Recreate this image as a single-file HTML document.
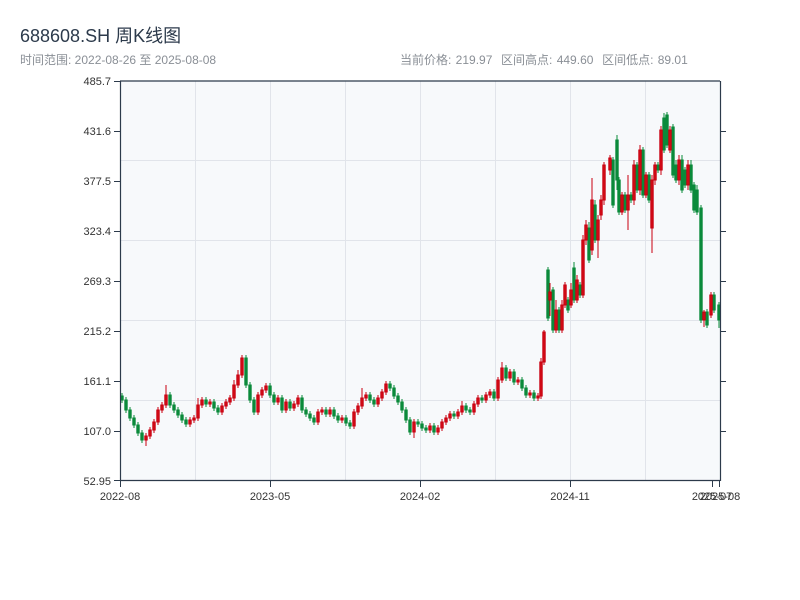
<!DOCTYPE html>
<html><head><meta charset="utf-8">
<style>
body{margin:0;width:800px;height:600px;background:#fff;font-family:"Liberation Sans","Noto Sans CJK SC",sans-serif;overflow:hidden;position:relative}
.t{position:absolute;left:20px;top:22px;font-size:18px;color:#2c3a4b}
.s{position:absolute;left:20px;top:51px;font-size:12px;color:#8a8f96}
.r{position:absolute;left:400px;top:51px;font-size:12px;color:#8a8f96;word-spacing:1px}
svg{position:absolute;left:0;top:0}
</style></head><body>
<div class="t">688608.SH 周K线图</div>
<div class="s">时间范围: 2022-08-26 至 2025-08-08</div>
<div class="r">当前价格: 219.97&nbsp;&nbsp;区间高点: 449.60&nbsp;&nbsp;区间低点: 89.01</div>
<svg width="800" height="600" font-family="Liberation Sans, sans-serif" font-size="11" fill="#333">
<rect x="120" y="81" width="600" height="400" fill="#f7f9fb"/>
<g stroke="#e1e4ea" stroke-width="1">
<line x1="195.5" y1="81" x2="195.5" y2="481"/><line x1="270.5" y1="81" x2="270.5" y2="481"/>
<line x1="345.5" y1="81" x2="345.5" y2="481"/><line x1="420.5" y1="81" x2="420.5" y2="481"/>
<line x1="495.5" y1="81" x2="495.5" y2="481"/><line x1="570.5" y1="81" x2="570.5" y2="481"/>
<line x1="645.5" y1="81" x2="645.5" y2="481"/>
<line x1="120" y1="160.5" x2="720" y2="160.5"/><line x1="120" y1="240.5" x2="720" y2="240.5"/>
<line x1="120" y1="320.5" x2="720" y2="320.5"/><line x1="120" y1="400.5" x2="720" y2="400.5"/>
</g>
<!-- green (down) candles -->
<path fill="#0a8a3a" stroke="#0a8a3a" stroke-width="1" d="
M122,393V403M120.8,396h2.4V400h-2.4Z
M126,397V413M124.8,400h2.4V410h-2.4Z
M130,407V421M128.8,410h2.4V418h-2.4Z
M134,415V428M132.8,418h2.4V425h-2.4Z
M138,422V436M136.8,425h2.4V433h-2.4Z
M142,430V443M140.8,433h2.4V440h-2.4Z
M170,392V408M168.8,395h2.4V405h-2.4Z
M174,402V413M172.8,405h2.4V410h-2.4Z
M178,407V418M176.8,410h2.4V415h-2.4Z
M182,412V423M180.8,415h2.4V420h-2.4Z
M186,417V427M184.8,420h2.4V424h-2.4Z
M206,397V407M204.8,400h2.4V404h-2.4Z
M214,399V411M212.8,402h2.4V408h-2.4Z
M218,405V415M216.8,408h2.4V412h-2.4Z
M246,355V388M244.8,358h2.4V385h-2.4Z
M250,382V403M248.8,385h2.4V400h-2.4Z
M254,397V415M252.8,400h2.4V412h-2.4Z
M270,383V398M268.8,386h2.4V395h-2.4Z
M274,392V405M272.8,395h2.4V402h-2.4Z
M282,395V413M280.8,398h2.4V410h-2.4Z
M290,399V411M288.8,402h2.4V408h-2.4Z
M302,395V413M300.8,398h2.4V410h-2.4Z
M306,407V417M304.8,410h2.4V414h-2.4Z
M310,411V421M308.8,414h2.4V418h-2.4Z
M314,415V425M312.8,418h2.4V422h-2.4Z
M326,407V417M324.8,410h2.4V414h-2.4Z
M334,407V419M332.8,410h2.4V416h-2.4Z
M338,413V423M336.8,416h2.4V420h-2.4Z
M346,415V426M344.8,418h2.4V423h-2.4Z
M350,420V429M348.8,423h2.4V426h-2.4Z
M370,392V403M368.8,395h2.4V400h-2.4Z
M374,397V407M372.8,400h2.4V404h-2.4Z
M390,381V391M388.8,384h2.4V388h-2.4Z
M394,385V399M392.8,388h2.4V396h-2.4Z
M398,393V405M396.8,396h2.4V402h-2.4Z
M402,399V413M400.8,402h2.4V410h-2.4Z
M406,407V423M404.8,410h2.4V420h-2.4Z
M410,417V435M408.8,420h2.4V432h-2.4Z
M418,419V427M416.8,422h2.4V424h-2.4Z
M422,421V431M420.8,424h2.4V428h-2.4Z
M426,425V433M424.8,428h2.4V430h-2.4Z
M434,423V435M432.8,426h2.4V432h-2.4Z
M454,411V419M452.8,414h2.4V416h-2.4Z
M466,403V413M464.8,406h2.4V410h-2.4Z
M470,407V415M468.8,410h2.4V412h-2.4Z
M482,395V403M480.8,398h2.4V400h-2.4Z
M494,389V401M492.8,392h2.4V398h-2.4Z
M506,365V381M504.8,368h2.4V378h-2.4Z
M514,369V385M512.8,372h2.4V382h-2.4Z
M522,377V391M520.8,380h2.4V388h-2.4Z
M526,385V398M524.8,388h2.4V395h-2.4Z
M534,390V401M532.8,393h2.4V398h-2.4Z
M548,267V321M546.8,270h2.4V318h-2.4Z
M553,287V333M551.8,290h2.4V330h-2.4Z
M559,307V333M557.8,310h2.4V330h-2.4Z
M568,297V313M566.8,300h2.4V310h-2.4Z
M574,262V303M572.8,268h2.4V300h-2.4Z
M580,282V298M578.8,285h2.4V295h-2.4Z
M589,222V263M587.8,228h2.4V260h-2.4Z
M595,200V243M593.8,205h2.4V240h-2.4Z
M613,157V208M611.8,160h2.4V205h-2.4Z
M617,135V190M615.8,140h2.4V180h-2.4Z
M619,177V215M617.8,180h2.4V212h-2.4Z
M625,192V213M623.8,195h2.4V210h-2.4Z
M631,192V203M629.8,195h2.4V200h-2.4Z
M637,162V193M635.8,165h2.4V190h-2.4Z
M643,147V198M641.8,150h2.4V195h-2.4Z
M649,172V203M647.8,175h2.4V200h-2.4Z
M658,162V173M656.8,165h2.4V170h-2.4Z
M664,113V153M662.8,118h2.4V150h-2.4Z
M667,112V148M665.8,115h2.4V145h-2.4Z
M673,124V178M671.8,127h2.4V175h-2.4Z
M676,160V183M674.8,165h2.4V180h-2.4Z
M682,155V193M680.8,160h2.4V190h-2.4Z
M685,167V188M683.8,170h2.4V185h-2.4Z
M691,160V193M689.8,165h2.4V190h-2.4Z
M694,182V213M692.8,185h2.4V210h-2.4Z
M697,185V215M695.8,190h2.4V212h-2.4Z
M701,205V323M699.8,208h2.4V320h-2.4Z
M707,309V328M705.8,312h2.4V325h-2.4Z
M714,292V313M712.8,295h2.4V310h-2.4Z
M719,302V328M717.8,305h2.4V320h-2.4Z"/>
<!-- red (up) candles -->
<path fill="#ee2b2b" stroke="#c8000f" stroke-width="1" d="
M146,433V446M144.8,436h2.4V440h-2.4Z
M150,427V439M148.8,430h2.4V436h-2.4Z
M154,419V433M152.8,422h2.4V430h-2.4Z
M158,407V425M156.8,410h2.4V422h-2.4Z
M162,402V413M160.8,405h2.4V410h-2.4Z
M166,385V408M164.8,395h2.4V405h-2.4Z
M190,417V427M188.8,420h2.4V424h-2.4Z
M194,415V423M192.8,418h2.4V420h-2.4Z
M198,398V421M196.8,405h2.4V418h-2.4Z
M202,397V408M200.8,400h2.4V405h-2.4Z
M210,399V407M208.8,402h2.4V404h-2.4Z
M222,403V415M220.8,406h2.4V412h-2.4Z
M226,399V409M224.8,402h2.4V406h-2.4Z
M230,395V405M228.8,398h2.4V402h-2.4Z
M234,380V401M232.8,385h2.4V398h-2.4Z
M238,370V388M236.8,375h2.4V385h-2.4Z
M242,355V378M240.8,358h2.4V375h-2.4Z
M258,392V415M256.8,395h2.4V412h-2.4Z
M262,387V398M260.8,390h2.4V395h-2.4Z
M266,383V393M264.8,386h2.4V390h-2.4Z
M278,395V405M276.8,398h2.4V402h-2.4Z
M286,399V413M284.8,402h2.4V410h-2.4Z
M294,401V411M292.8,404h2.4V408h-2.4Z
M298,395V407M296.8,398h2.4V404h-2.4Z
M318,409V425M316.8,412h2.4V422h-2.4Z
M322,407V415M320.8,410h2.4V412h-2.4Z
M330,407V417M328.8,410h2.4V414h-2.4Z
M342,415V423M340.8,418h2.4V420h-2.4Z
M354,409V429M352.8,412h2.4V426h-2.4Z
M358,403V415M356.8,406h2.4V412h-2.4Z
M362,388V409M360.8,398h2.4V406h-2.4Z
M366,392V401M364.8,395h2.4V398h-2.4Z
M378,395V407M376.8,398h2.4V404h-2.4Z
M382,389V401M380.8,392h2.4V398h-2.4Z
M386,381V395M384.8,384h2.4V392h-2.4Z
M414,419V438M412.8,422h2.4V432h-2.4Z
M430,423V433M428.8,426h2.4V430h-2.4Z
M438,425V435M436.8,428h2.4V432h-2.4Z
M442,419V431M440.8,422h2.4V428h-2.4Z
M446,415V425M444.8,418h2.4V422h-2.4Z
M450,411V421M448.8,414h2.4V418h-2.4Z
M458,409V419M456.8,412h2.4V416h-2.4Z
M462,401V415M460.8,406h2.4V412h-2.4Z
M474,401V415M472.8,404h2.4V412h-2.4Z
M478,395V407M476.8,398h2.4V404h-2.4Z
M486,392V403M484.8,395h2.4V400h-2.4Z
M490,389V398M488.8,392h2.4V395h-2.4Z
M498,377V401M496.8,380h2.4V398h-2.4Z
M502,362V383M500.8,368h2.4V380h-2.4Z
M510,369V381M508.8,372h2.4V378h-2.4Z
M518,377V385M516.8,380h2.4V382h-2.4Z
M530,390V398M528.8,393h2.4V395h-2.4Z
M538,393V401M536.8,396h2.4V398h-2.4Z
M541,358V399M539.8,362h2.4V396h-2.4Z
M544,330V365M542.8,332h2.4V362h-2.4Z
M550,283V316M548.8,292h2.4V300h-2.4Z
M556,300V333M554.8,310h2.4V330h-2.4Z
M562,300V333M560.8,305h2.4V330h-2.4Z
M565,282V308M563.8,285h2.4V305h-2.4Z
M571,283V308M569.8,290h2.4V305h-2.4Z
M577,275V303M575.8,280h2.4V300h-2.4Z
M583,235V298M581.8,240h2.4V295h-2.4Z
M586,220V245M584.8,225h2.4V240h-2.4Z
M592,178V255M590.8,200h2.4V250h-2.4Z
M598,215V258M596.8,220h2.4V240h-2.4Z
M601,195V220M599.8,200h2.4V215h-2.4Z
M604,162V205M602.8,165h2.4V200h-2.4Z
M610,155V175M608.8,158h2.4V170h-2.4Z
M622,192V215M620.8,195h2.4V212h-2.4Z
M628,175V230M626.8,195h2.4V210h-2.4Z
M634,160V205M632.8,165h2.4V200h-2.4Z
M640,145V195M638.8,150h2.4V190h-2.4Z
M646,172V198M644.8,175h2.4V195h-2.4Z
M652,175V253M650.8,180h2.4V228h-2.4Z
M655,162V185M653.8,165h2.4V180h-2.4Z
M661,126V175M659.8,130h2.4V170h-2.4Z
M670,126V153M668.8,130h2.4V150h-2.4Z
M679,155V185M677.8,160h2.4V180h-2.4Z
M688,160V190M686.8,165h2.4V185h-2.4Z
M704,310V327M702.8,312h2.4V320h-2.4Z
M711,292V318M709.8,295h2.4V315h-2.4Z"/>
<g stroke="#2c3a4b" stroke-width="1.2" fill="none">
<line x1="120" y1="81" x2="720" y2="81"/><line x1="120.5" y1="81" x2="120.5" y2="481"/>
<line x1="120" y1="480.5" x2="720" y2="480.5"/><line x1="720.5" y1="81" x2="720.5" y2="481"/>
</g>
<g stroke="#2c3a4b" stroke-width="1">
<line x1="114" y1="81.5" x2="120" y2="81.5"/><line x1="114" y1="131.5" x2="120" y2="131.5"/><line x1="114" y1="181.5" x2="120" y2="181.5"/><line x1="114" y1="231.5" x2="120" y2="231.5"/><line x1="114" y1="281.5" x2="120" y2="281.5"/><line x1="114" y1="331.5" x2="120" y2="331.5"/><line x1="114" y1="381.5" x2="120" y2="381.5"/><line x1="114" y1="431.5" x2="120" y2="431.5"/><line x1="114" y1="480.5" x2="120" y2="480.5"/>
<line x1="720" y1="131.5" x2="726" y2="131.5"/><line x1="720" y1="181.5" x2="726" y2="181.5"/><line x1="720" y1="231.5" x2="726" y2="231.5"/><line x1="720" y1="281.5" x2="726" y2="281.5"/><line x1="720" y1="331.5" x2="726" y2="331.5"/><line x1="720" y1="381.5" x2="726" y2="381.5"/><line x1="720" y1="431.5" x2="726" y2="431.5"/>
<line x1="120.5" y1="481" x2="120.5" y2="487"/><line x1="270.5" y1="481" x2="270.5" y2="487"/><line x1="420.5" y1="481" x2="420.5" y2="487"/><line x1="570.5" y1="481" x2="570.5" y2="487"/><line x1="712.5" y1="481" x2="712.5" y2="487"/><line x1="719.5" y1="481" x2="719.5" y2="487"/>
</g>
<g text-anchor="end">
<text x="111" y="85">485.7</text><text x="111" y="135">431.6</text><text x="111" y="185">377.5</text><text x="111" y="235">323.4</text><text x="111" y="285">269.3</text><text x="111" y="335">215.2</text><text x="111" y="385">161.1</text><text x="111" y="435">107.0</text><text x="111" y="485">52.95</text>
</g>
<g text-anchor="middle">
<text x="120" y="500">2022-08</text><text x="270" y="500">2023-05</text><text x="420" y="500">2024-02</text><text x="570" y="500">2024-11</text><text x="712" y="500">2025-07</text><text x="720" y="500">2025-08</text>
</g>
</svg>
</body></html>
